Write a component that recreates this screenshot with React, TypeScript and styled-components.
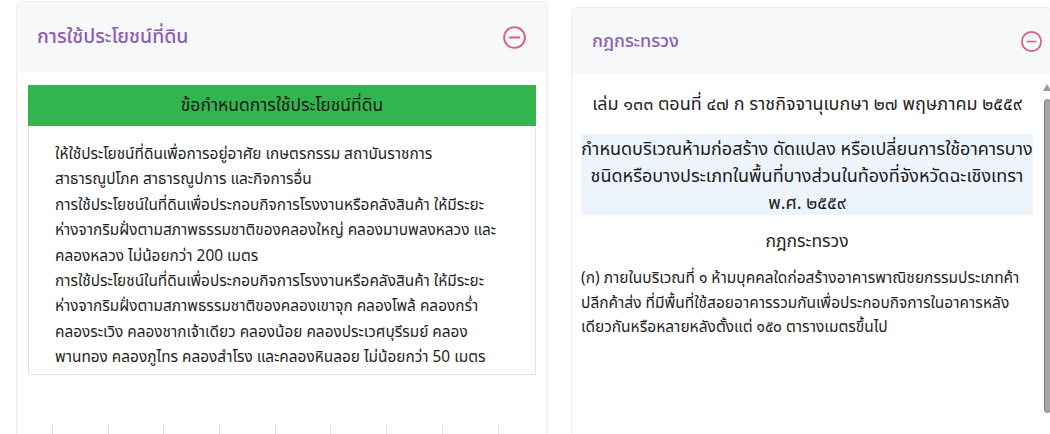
import React from 'react';
import styled, { createGlobalStyle } from 'styled-components';

// ═══════════════════════════════════════════════════════════════════════════
// GLOBAL
// ═══════════════════════════════════════════════════════════════════════════

const GlobalStyle = createGlobalStyle`
  html, body {
    margin: 0;
    padding: 0;
    background: #ffffff;
    overflow: hidden;
  }
  body {
    font-family: "Noto Sans Thai", "Noto Sans", "DejaVu Sans", sans-serif;
    color: #222;
  }
  #root {
    height: 434px;
    overflow: hidden;
  }
`;

// ═══════════════════════════════════════════════════════════════════════════
// STYLED COMPONENTS
// ═══════════════════════════════════════════════════════════════════════════

const Page = styled.div`
  display: flex;
  align-items: flex-start;
  gap: 23px;
  padding-left: 16px;
  width: 1100px;
  height: 434px;
`;

const Card = styled.section<{ $width: number; $top: number }>`
  display: flex;
  flex-direction: column;
  flex: none;
  width: ${({ $width }) => $width}px;
  height: 470px;
  margin-top: ${({ $top }) => $top}px;
  background: #f7f8fa;
  border: 1px solid #eceef1;
  border-radius: 6px;
  box-sizing: border-box;
`;

const CardHeader = styled.header<{ $height: number; $padRight: number }>`
  display: flex;
  align-items: center;
  justify-content: space-between;
  height: ${({ $height }) => $height}px;
  padding: 0 ${({ $padRight }) => $padRight}px 0 20px;
  flex: none;
`;

const Title = styled.h2<{ $size: number }>`
  margin: 0;
  font-size: ${({ $size }) => $size}px;
  font-weight: 500;
  color: #8a5fb3;
`;

const Panel = styled.div`
  flex: 1;
  display: flex;
  background: #ffffff;
  margin: 0 1px;
  border-radius: 4px 4px 0 0;
  min-height: 0;
`;

const PanelBody = styled.div<{ $pad: string }>`
  flex: 1;
  display: flex;
  flex-direction: column;
  padding: ${({ $pad }) => $pad};
  min-width: 0;
`;

const GreenBar = styled.div`
  height: 41px;
  display: flex;
  align-items: center;
  justify-content: center;
  background: #31b54f;
  color: #1b1b1b;
  font-size: 17.5px;
`;

const RuleBox = styled.div`
  border: 1px solid #e4e4e4;
  border-top: none;
  padding: 16px 4px 3px 26px;
  font-size: 15.4px;
  line-height: 25.4px;
  color: #1f1f1f;
`;

const Line = styled.div`
  white-space: nowrap;
`;

const TickRow = styled.div`
  display: grid;
  grid-template-columns: 24px repeat(9, 55.7px);
  height: 12px;
  margin-top: 49px;
`;

const Tick = styled.div<{ $first?: boolean }>`
  border-left: ${({ $first }) => ($first ? 'none' : '1px solid #e4e4e4')};
`;

const Gazette = styled.div`
  text-align: center;
  font-size: 18px;
  line-height: 26px;
  color: #1f1f1f;
  padding-top: 18px;
`;

const Highlight = styled.div`
  margin-top: 16px;
  background: #eef4fc;
  padding-top: 2px;
  height: 81px;
  box-sizing: border-box;
  text-align: center;
  font-size: 18px;
  line-height: 27px;
  color: #1b1b1b;
`;

const SubHeading = styled.div`
  text-align: center;
  font-size: 17.5px;
  line-height: 26px;
  margin-top: 14px;
  color: #1f1f1f;
`;

const Clause = styled.div`
  font-size: 15.5px;
  line-height: 24.5px;
  margin-top: 12px;
  color: #1f1f1f;
`;

const ScrollTrack = styled.div`
  flex: none;
  width: 8px;
  display: flex;
  flex-direction: column;
  align-items: center;
  padding-top: 10px;
  gap: 8px;
`;

const ScrollArrow = styled.div`
  width: 0;
  height: 0;
  border-left: 4px solid transparent;
  border-right: 4px solid transparent;
  border-bottom: 7px solid #9a9a9a;
`;

const ScrollThumb = styled.div`
  width: 7px;
  height: 314px;
  background: #a7a7a7;
  border: 1px solid #7d7d7d;
  border-radius: 4px;
  box-sizing: border-box;
`;

// ═══════════════════════════════════════════════════════════════════════════
// ICONS
// ═══════════════════════════════════════════════════════════════════════════

const MinusCircle: React.FC<{ size: number }> = ({ size }) => (
  <svg width={size} height={size} viewBox="0 0 24 24" fill="none" stroke="#e2577f" strokeWidth="1.8">
    <circle cx="12" cy="12" r="10" />
    <line x1="7.5" y1="12" x2="16.5" y2="12" strokeLinecap="round" />
  </svg>
);

// ═══════════════════════════════════════════════════════════════════════════
// DATA
// ═══════════════════════════════════════════════════════════════════════════

const landUseLines = [
  'ให้ใช้ประโยชน์ที่ดินเพื่อการอยู่อาศัย เกษตรกรรม สถาบันราชการ',
  'สาธารณูปโภค สาธารณูปการ และกิจการอื่น',
  'การใช้ประโยชน์ในที่ดินเพื่อประกอบกิจการโรงงานหรือคลังสินค้า ให้มีระยะ',
  'ห่างจากริมฝั่งตามสภาพธรรมชาติของคลองใหญ่ คลองมาบพลงหลวง และ',
  'คลองหลวง ไม่น้อยกว่า 200 เมตร',
  'การใช้ประโยชน์ในที่ดินเพื่อประกอบกิจการโรงงานหรือคลังสินค้า ให้มีระยะ',
  'ห่างจากริมฝั่งตามสภาพธรรมชาติของคลองเขาจุก คลองโพล้ คลองกร่ำ',
  'คลองระเวิง คลองชากเจ้าเดียว คลองน้อย คลองประเวศบุรีรมย์ คลอง',
  'พานทอง คลองภูไทร คลองสำโรง และคลองหินลอย ไม่น้อยกว่า 50 เมตร',
];

const titleLines = [
  'กำหนดบริเวณห้ามก่อสร้าง ดัดแปลง หรือเปลี่ยนการใช้อาคารบาง',
  'ชนิดหรือบางประเภทในพื้นที่บางส่วนในท้องที่จังหวัดฉะเชิงเทรา',
  'พ.ศ. ๒๕๕๙',
];

const clauseLines = [
  '(ก) ภายในบริเวณที่ ๑ ห้ามบุคคลใดก่อสร้างอาคารพาณิชยกรรมประเภทค้า',
  'ปลีกค้าส่ง ที่มีพื้นที่ใช้สอยอาคารรวมกันเพื่อประกอบกิจการในอาคารหลัง',
  'เดียวกันหรือหลายหลังตั้งแต่ ๑๕๐ ตารางเมตรขึ้นไป',
];

// ═══════════════════════════════════════════════════════════════════════════
// COMPONENT
// ═══════════════════════════════════════════════════════════════════════════

const App: React.FC = () => (
  <>
    <GlobalStyle />
    <Page>
      <Card $width={532} $top={1}>
        <CardHeader $height={70} $padRight={20}>
          <Title $size={19.5}>การใช้ประโยชน์ที่ดิน</Title>
          <MinusCircle size={25} />
        </CardHeader>
        <Panel>
          <PanelBody $pad="13px 10px 0 10px">
            <GreenBar>ข้อกำหนดการใช้ประโยชน์ที่ดิน</GreenBar>
            <RuleBox>
              {landUseLines.map((l, i) => (
                <Line key={i}>{l}</Line>
              ))}
            </RuleBox>
            <TickRow>
              <Tick $first />
              {Array.from({ length: 9 }).map((_, i) => (
                <Tick key={i} />
              ))}
            </TickRow>
          </PanelBody>
        </Panel>
      </Card>

      <Card $width={482} $top={7}>
        <CardHeader $height={66} $padRight={9}>
          <Title $size={18}>กฎกระทรวง</Title>
          <MinusCircle size={23} />
        </CardHeader>
        <Panel>
          <PanelBody $pad="0 10px 0 8px">
            <Gazette>เล่ม ๑๓๓ ตอนที่ ๔๗ ก ราชกิจจานุเบกษา ๒๗ พฤษภาคม ๒๕๕๙</Gazette>
            <Highlight>
              {titleLines.map((l, i) => (
                <Line key={i}>{l}</Line>
              ))}
            </Highlight>
            <SubHeading>กฎกระทรวง</SubHeading>
            <Clause>
              {clauseLines.map((l, i) => (
                <Line key={i}>{l}</Line>
              ))}
            </Clause>
          </PanelBody>
          <ScrollTrack>
            <ScrollArrow />
            <ScrollThumb />
          </ScrollTrack>
        </Panel>
      </Card>
    </Page>
  </>
);

export default App;
